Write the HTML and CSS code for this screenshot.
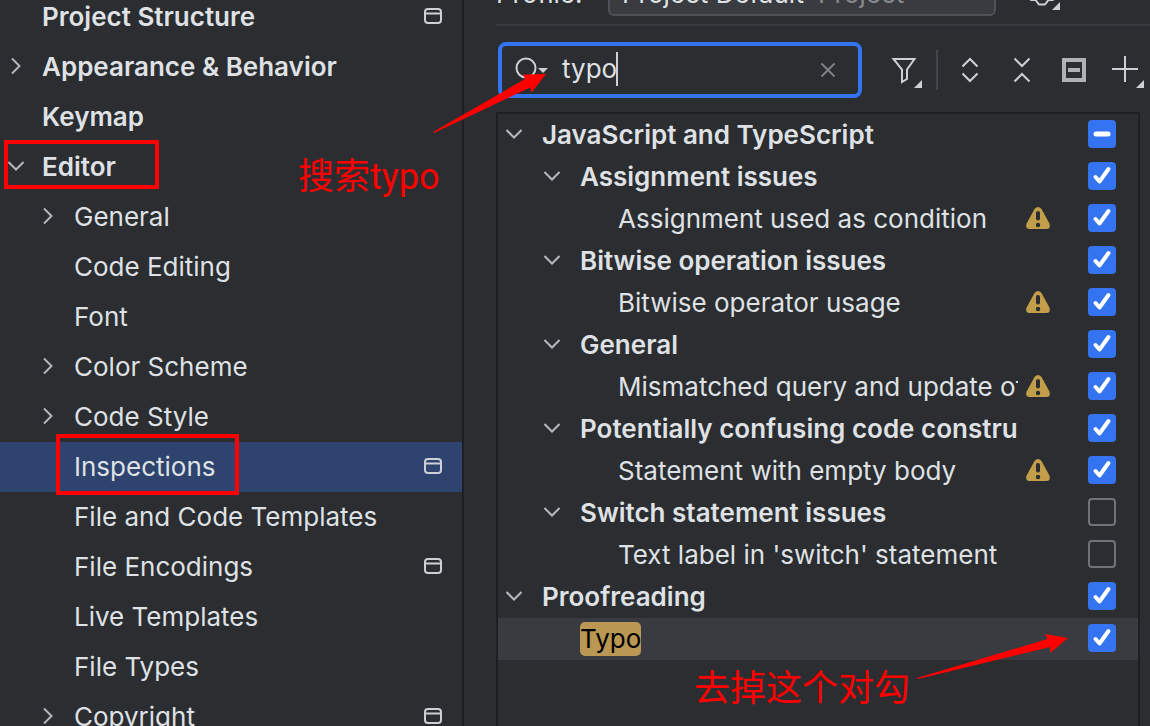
FILE: index.html
```
<!DOCTYPE html>
<html lang="en">
<head>
<meta charset="utf-8">
<title>Settings – Inspections</title>
<link rel="stylesheet" href="styles.css">
</head>
<body>
<svg class="defs" aria-hidden="true">
  <symbol id="right" viewBox="0 0 16 16"><path d="M4 .5 11.500 8 4 15.500" fill="none" stroke="#b4b8bf" stroke-width="2"/></symbol>
  <symbol id="down" viewBox="0 0 16 16"><path d="M.5 4 8 11.500 15.500 4" fill="none" stroke="#b4b8bf" stroke-width="2"/></symbol>
  <symbol id="window" viewBox="0 0 18 16"><rect x="1" y="1" width="16" height="14" rx="3" fill="none" stroke="#ced0d6" stroke-width="2"/><path d="M1 5.500H17" stroke="#ced0d6" stroke-width="2"/></symbol>
  <symbol id="warn" viewBox="0 0 24 22"><path d="M8.500 2Q12-2 15.500 2L23.400 16.500Q25 22 20.500 22H3.500Q-1 22 .6 16.500Z" fill="#c29e4a"/><path d="M12 6V11.500" stroke="#2b2d30" stroke-width="4" stroke-linecap="round"/><circle cx="12" cy="18" r="2.200" fill="#2b2d30"/></symbol>
</svg>
<div class="app">
  <nav class="sidebar" aria-label="Settings">
    <button class="item strong"><span class="slot"></span><span class="name">Project Structure</span><svg class="window"><use href="#window"/></svg></button>
    <button class="item strong"><svg class="slot"><use href="#right"/></svg><span class="name">Appearance &amp; Behavior</span></button>
    <button class="item strong"><span class="slot"></span><span class="name">Keymap</span></button>
    <button class="item strong"><svg class="slot"><use href="#down"/></svg><span class="name">Editor</span></button>
    <button class="item child"><svg class="slot"><use href="#right"/></svg><span class="name">General</span></button>
    <button class="item child"><span class="slot"></span><span class="name">Code Editing</span></button>
    <button class="item child"><span class="slot"></span><span class="name">Font</span></button>
    <button class="item child"><svg class="slot"><use href="#right"/></svg><span class="name">Color Scheme</span></button>
    <button class="item child"><svg class="slot"><use href="#right"/></svg><span class="name">Code Style</span></button>
    <button class="item child selected"><span class="slot"></span><span class="name">Inspections</span><svg class="window"><use href="#window"/></svg></button>
    <button class="item child"><span class="slot"></span><span class="name">File and Code Templates</span></button>
    <button class="item child"><span class="slot"></span><span class="name">File Encodings</span><svg class="window"><use href="#window"/></svg></button>
    <button class="item child"><span class="slot"></span><span class="name">Live Templates</span></button>
    <button class="item child"><span class="slot"></span><span class="name">File Types</span></button>
    <button class="item child"><svg class="slot"><use href="#right"/></svg><span class="name">Copyright</span><svg class="window"><use href="#window"/></svg></button>
  </nav>

  <main class="pane">
    <div class="profile">
      <label class="profile-label" for="profile">Profile:</label>
      <div class="combo">
        <select id="profile"><option>Project Default</option></select>
        <span class="scope">Project</span>
      </div>
      <button class="gear" aria-label="Profile actions"><svg width="36" height="36" viewBox="0 0 36 36"><path d="M15 6h6l3 4.500h5L32 16l-2.500 2.500L32 22l-3 4H24.500L21 30.500H15L11.500 26H7L4 22l2.500-3.500L4 16l3-5.500h5Z" fill="none" stroke="#ced0d6" stroke-width="2" stroke-linejoin="round"/><path d="M36 28V36H28Z" fill="#ced0d6"/></svg></button>
    </div>
    <div class="toolbar">
      <div class="search">
        <svg class="lens" width="34" height="26" viewBox="0 0 34 26"><circle cx="12" cy="12" r="9.500" fill="none" stroke="#ced0d6" stroke-width="2"/><path d="m19 19 5 5" stroke="#ced0d6" stroke-width="2"/><path d="M24 12H34L29 17Z" fill="#ced0d6"/></svg>
        <input class="query" type="text" aria-label="Search inspections" value="typo" size="4">
        <span class="caret"></span>
        <button class="clear" aria-label="Clear"><svg width="16" height="16" viewBox="0 0 16 16"><path d="m1.500 2.500 13 13M14.500 2.500l-13 13" stroke="#7d8188" stroke-width="2"/></svg></button>
      </div>
      <div class="tools">
        <button class="tool" aria-label="Filter"><svg width="36" height="36" viewBox="0 0 36 36"><path d="M5.500 7H26.500L19 17.500V27L14 30V17.500Z" fill="none" stroke="#ced0d6" stroke-width="2"/><path d="M34 28V36H26Z" fill="#ced0d6"/></svg></button>
        <span class="divider"></span>
        <button class="tool" aria-label="Expand all"><svg width="36" height="36" viewBox="0 0 36 36"><path d="m10.500 14.500 7.500-7.500 7.500 7.500M10.500 21.500 18 29l7.500-7.500" fill="none" stroke="#ced0d6" stroke-width="2"/></svg></button>
        <button class="tool" aria-label="Collapse all"><svg width="36" height="36" viewBox="0 0 36 36"><path d="m10.500 6.500 7.500 7.500 7.500-7.500M10.500 29.500 18 22l7.500 7.500" fill="none" stroke="#ced0d6" stroke-width="2"/></svg></button>
        <button class="tool" aria-label="Reset"><svg width="36" height="36" viewBox="0 0 36 36"><path d="M8 8H28V28H8Z" fill="none" stroke="#afb1b3" stroke-width="4"/><path d="M12 18H24" stroke="#afb1b3" stroke-width="4"/></svg></button>
        <button class="tool" aria-label="Add"><svg width="36" height="36" viewBox="0 0 36 36"><path d="M4 17H30M17 4V30" stroke="#ced0d6" stroke-width="2"/><path d="M36 28V36H28Z" fill="#ced0d6"/></svg></button>
      </div>
    </div>

    <div class="tree">
      <div class="row l1"><svg class="slot"><use href="#down"/></svg><label for="c1">JavaScript and TypeScript</label><span class="severity"></span><input id="c1" class="mixed" type="checkbox"></div>
      <div class="row l2"><svg class="slot"><use href="#down"/></svg><label for="c2">Assignment issues</label><span class="severity"></span><input id="c2" type="checkbox" checked></div>
      <div class="row l3"><label for="c3">Assignment used as condition</label><svg class="severity"><use href="#warn"/></svg><input id="c3" type="checkbox" checked></div>
      <div class="row l2"><svg class="slot"><use href="#down"/></svg><label for="c4">Bitwise operation issues</label><span class="severity"></span><input id="c4" type="checkbox" checked></div>
      <div class="row l3"><label for="c5">Bitwise operator usage</label><svg class="severity"><use href="#warn"/></svg><input id="c5" type="checkbox" checked></div>
      <div class="row l2"><svg class="slot"><use href="#down"/></svg><label for="c6">General</label><span class="severity"></span><input id="c6" type="checkbox" checked></div>
      <div class="row l3"><label for="c7">Mismatched query and update of</label><svg class="severity"><use href="#warn"/></svg><input id="c7" type="checkbox" checked></div>
      <div class="row l2"><svg class="slot"><use href="#down"/></svg><label for="c8">Potentially confusing code constru</label><span class="severity"></span><input id="c8" type="checkbox" checked></div>
      <div class="row l3"><label for="c9">Statement with empty body</label><svg class="severity"><use href="#warn"/></svg><input id="c9" type="checkbox" checked></div>
      <div class="row l2"><svg class="slot"><use href="#down"/></svg><label for="c10">Switch statement issues</label><span class="severity"></span><input id="c10" type="checkbox"></div>
      <div class="row l3"><label for="c11">Text label in 'switch' statement</label><span class="severity"></span><input id="c11" type="checkbox"></div>
      <div class="row l1"><svg class="slot"><use href="#down"/></svg><label for="c12">Proofreading</label><span class="severity"></span><input id="c12" type="checkbox" checked></div>
      <div class="row leaf current"><label for="c13"><mark>Typo</mark></label><span class="severity"></span><input id="c13" type="checkbox" checked></div>
    </div>
  </main>

  <div class="notes">
    <div class="frame frame-editor"></div>
    <div class="frame frame-inspections"></div>
    <svg class="arrows" width="1150" height="726" viewBox="0 0 1150 726"><path d="M433 132 525 79 523 74.500 546 74 531.500 92.500 530 87.500 434 133ZM917 678 1047.500 639 1045 634 1068 638 1050 653V647L918 679Z" fill="#f00"/></svg>
    <p class="note note-search">搜索typo</p>
    <p class="note note-uncheck">去掉这个对勾</p>
  </div>
</div>
</body>
</html>
```
FILE: styles.css
```
* { box-sizing: border-box; }

body {
  margin: 0;
  background: #2b2d30;
  color: #dfe1e5;
  font: 26px/32px Inter, "Noto Sans", sans-serif;
}

button, input, select {
  margin: 0;
  padding: 0;
  border: 0;
  background: none;
  color: inherit;
  font: inherit;
}

svg { display: block; flex: none; }
.defs { position: absolute; width: 0; height: 0; }

.app {
  position: relative;
  display: flex;
  height: 100vh;
  overflow: hidden;
}

/* Settings categories */
.sidebar {
  flex: 0 0 464px;
  margin-top: -8px;
  border-right: 2px solid #1e1f22;
}

.item {
  display: flex;
  align-items: center;
  width: 100%;
  height: 50px;
  padding: 0 20px 2px 8px;
  text-align: left;
}

.strong { font-weight: 600; }
.item.child { padding-left: 40px; }
.selected { background: #2e436e; }

.slot { flex: none; width: 16px; height: 16px; }
.item .slot { margin-right: 18px; }
.name { flex: 1; padding-top: 2px; }
.window { width: 18px; height: 16px; }

/* Inspection profile */
.pane {
  flex: 1;
  min-width: 0;
  display: flex;
  flex-direction: column;
  padding-left: 32px;
}

.profile {
  display: flex;
  align-items: center;
  height: 54px;
  margin-top: -28px;
  padding-bottom: 8px;
  border-bottom: 2px solid #393b40;
}

.profile-label { width: 112px; }

.combo {
  position: relative;
  width: 388px;
  height: 44px;
  border: 2px solid #4e5157;
  border-radius: 6px;
  background: #393b40;
}

.combo select {
  width: 100%;
  height: 100%;
  padding-left: 12px;
  appearance: none;
}

.scope {
  position: absolute;
  left: 208px;
  top: 4px;
  color: #868a91;
  pointer-events: none;
}

.gear { margin: 0 0 4px 28px; }

/* Search and actions */
.toolbar {
  display: flex;
  align-items: center;
  gap: 26px;
  margin: 16px 6px 14px 2px;
}

.search {
  flex: 1;
  min-width: 0;
  display: flex;
  align-items: center;
  height: 56px;
  padding: 0 22px 2px 12px;
  border: 4px solid #3574f0;
  border-radius: 8px;
}

.query {
  width: 56px;
  margin-left: 14px;
  field-sizing: content;
  outline: 0;
}

.caret { width: 2px; height: 34px; margin-left: -2px; background: #ced0d6; }
.clear { margin-left: auto; }

.tools { display: flex; align-items: center; gap: 16px; }
.tool { width: 36px; height: 36px; }
.divider { width: 2px; height: 40px; margin: 0 -2px 0 -4px; background: #43454a; }

/* Inspection tree */
.tree {
  flex: 1;
  margin-right: 10px;
  border: 2px solid #1e1f22;
  border-bottom: 0;
}

.row {
  display: flex;
  align-items: center;
  height: 42px;
  padding-right: 22px;
  padding-bottom: 2px;
}

.row .slot { margin-right: 20px; }
.row label { flex: 1; min-width: 0; padding-top: 2px; overflow: hidden; white-space: nowrap; }

.l1 { padding-left: 8px; font-weight: 600; }
.l2 { padding-left: 46px; font-weight: 600; }
.l3 { padding-left: 120px; }
.leaf { padding-left: 82px; }
.current { background: #393b40; }

.severity { flex: none; width: 24px; height: 24px; margin: 0 38px 0 8px; }

.row input {
  flex: none;
  width: 28px;
  height: 28px;
  border: 2px solid #6f737a;
  border-radius: 4px;
  appearance: none;
}

.row input:checked, .row .mixed {
  border: 0;
  background: #3574f0 url("data:image/svg+xml,%3Csvg xmlns='http://www.w3.org/2000/svg' viewBox='0 0 28 28'%3E%3Cpath d='M7.500 15 11.500 19.500 20.500 7' fill='none' stroke='white' stroke-width='4' stroke-linecap='round' stroke-linejoin='round'/%3E%3C/svg%3E");
}

.row .mixed {
  background-image: url("data:image/svg+xml,%3Csvg xmlns='http://www.w3.org/2000/svg' viewBox='0 0 28 28'%3E%3Cpath d='M8 14H20' stroke='white' stroke-width='5' stroke-linecap='round'/%3E%3C/svg%3E");
}

mark {
  display: inline-block;
  height: 34px;
  line-height: 34px;
  border-radius: 5px;
  background: #ba9752;
  color: #000;
  vertical-align: top;
}

/* Hand-drawn annotations above the window */
.notes { position: absolute; inset: 0; pointer-events: none; color: #f00; }
.arrows { position: absolute; left: 0; top: 0; }
.frame { position: absolute; border: 4px solid #f00; }
.frame-editor { left: 4px; top: 140px; width: 155px; height: 49px; }
.frame-inspections { left: 56px; top: 434px; width: 183px; height: 61px; }

.note {
  position: absolute;
  margin: 0;
  font: 36px/44px Roboto, "Noto Sans CJK SC", sans-serif;
  white-space: nowrap;
}

.note-search { left: 298px; top: 155px; }
.note-uncheck { left: 694px; top: 667px; }
```
